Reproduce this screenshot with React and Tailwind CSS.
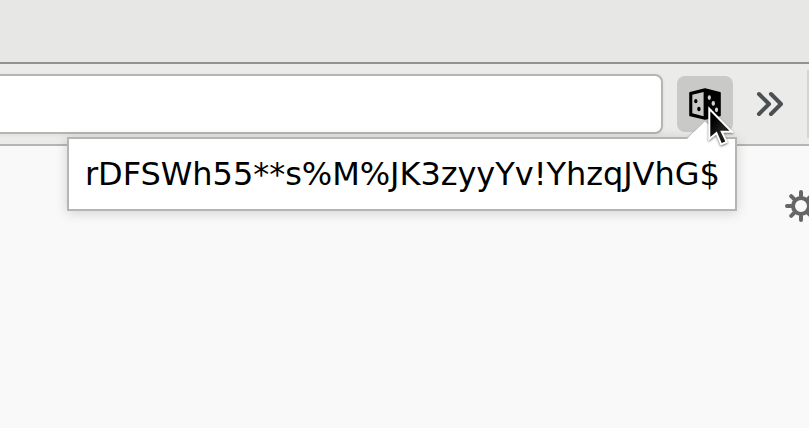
function DiceIcon() {
  return (
    <svg className="block h-8 w-8" viewBox="0 0 32 32">
      <path d="M1.2 5 16 1.2 30.8 5v22.2L16 30.8 1.2 27.2Z" fill="#000" stroke="#000" strokeWidth="2" strokeLinejoin="round" />
      <path d="M3.3 6.8 14.6 4v24.3L3.3 25.2Z" fill="#c9c9c8" />
      <g fill="#000">
        <ellipse cx="6.8" cy="13.2" rx="1.6" ry="2.1" />
        <ellipse cx="9.9" cy="21" rx="1.7" ry="2.3" />
      </g>
      <g fill="#d3d3d2">
        <ellipse cx="20.3" cy="9.6" rx="1.6" ry="2.3" />
        <ellipse cx="24.3" cy="15.4" rx="1.7" ry="2.4" />
        <ellipse cx="27.5" cy="21.8" rx="1.6" ry="2.4" />
      </g>
    </svg>
  );
}

function ChevronsIcon() {
  return (
    <svg className="mt-[26px] ml-[22px] block h-7 w-[30px] shrink-0" viewBox="0 0 30 28" fill="none" stroke="#4a5053" strokeWidth="4" strokeLinecap="round" strokeLinejoin="round">
      <path d="m4 4 10 10L4 24M16 4l10 10-10 10" />
    </svg>
  );
}

function GearIcon() {
  return (
    <svg className="block h-8 w-8 shrink-0" viewBox="0 0 32 32" fill="none" stroke="#666" strokeWidth="4" strokeLinecap="round">
      <circle cx="16" cy="16" r="8" />
      <path d="M16 2v4M16 26v4M2 16h4M26 16h4M6.2 6.2l3 3M22.8 22.8l3 3M25.8 6.2l-3 3M9.2 22.8l-3 3" />
    </svg>
  );
}

function Pointer() {
  return (
    <svg className="absolute top-[98px] left-[700px] block h-[54px] w-[44px]" viewBox="0 0 44 54">
      <defs>
        <linearGradient id="pointerFill" x1="0" y1="0" x2="1" y2="1">
          <stop offset="0.25" stopColor="#000" />
          <stop offset="0.6" stopColor="#222" />
          <stop offset="1" stopColor="#000" />
        </linearGradient>
      </defs>
      <path
        className="drop-shadow-[0_1px_1px_rgba(0,0,0,0.55)]"
        d="M9.3 10.8V41L16.4 35.2 21.2 46.3 26.6 43.9 21.8 33.8H31.8Z"
        fill="url(#pointerFill)"
        stroke="#fff"
        strokeWidth="2"
        strokeLinejoin="miter"
      />
    </svg>
  );
}

export default function App() {
  return (
    <div className="relative flex h-[428px] w-[809px] flex-col overflow-hidden bg-[#f9f9f9]">
      <div className="h-16 shrink-0 border-b-2 border-[#919190] bg-[#e7e7e5]" />
      <div className="flex h-[82px] shrink-0 border-b-2 border-[#b4b4b1] bg-[#ebebe9]">
        <div className="mt-[10px] -ml-2 h-[60px] w-[671px] shrink-0 rounded-lg border-2 border-[#b5b5b1] bg-white shadow-[0_1px_4px_rgba(0,0,0,0.06)]" />
        <div className="mt-3 ml-[14px] flex h-14 w-14 shrink-0 justify-center rounded-lg bg-[#c9c9c8] pt-3">
          <DiceIcon />
        </div>
        <ChevronsIcon />
        <div className="mt-1.5 ml-[22px] h-[68px] w-0.5 shrink-0 bg-[#d4d4d2]" />
      </div>
      <div className="flex pt-11 pl-[785px]">
        <GearIcon />
      </div>
      <div className="absolute top-[137px] left-[67px] flex h-[74px] w-[670px] items-center border-2 border-[#b5b5b1] bg-white pl-4 shadow-[0_2px_12px_rgba(0,0,0,0.16)]">
        <span className="font-['DejaVu_Sans',sans-serif] text-[32px] leading-[38px] tracking-[-0.045px] whitespace-nowrap text-black">
          rDFSWh55**s%M%JK3zyyYv!YhzqJVhG$
        </span>
      </div>
      <svg className="absolute top-[118px] left-[684px] block h-[22px] w-[44px]" viewBox="0 0 44 22">
        <path d="M2 22 21 3 40 22Z" fill="#fff" />
        <path d="M2.5 20.2 21 2.7 39.5 20.2" fill="none" stroke="#b9b9b7" strokeWidth="1" />
      </svg>
      <Pointer />
    </div>
  );
}
